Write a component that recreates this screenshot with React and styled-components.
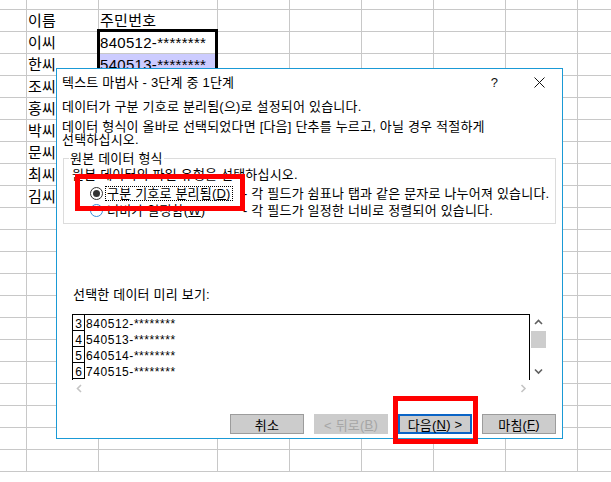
import React from 'react';
import styled, { createGlobalStyle } from 'styled-components';

const GlobalStyle = createGlobalStyle`
  html, body { margin: 0; padding: 0; background: #fff; }
  body { font-family: "Liberation Sans", "Noto Sans CJK KR", sans-serif; color: #000; }
  #root { width: 611px; height: 482px; }
`;

const Page = styled.div`
  position: relative;
  width: 611px;
  height: 482px;
  overflow: hidden;
  background: #fff;
`;

/* ---------- spreadsheet ---------- */
const Sheet = styled.div`
  display: grid;
  grid-template-columns: 27px 72px 119px repeat(6, 72px);
  grid-template-rows: 10px;
  grid-auto-rows: 22px;
`;

const Cell = styled.div`
  box-sizing: border-box;
  border-right: 1px solid #c8c8c8;
  border-bottom: 1px solid #c8c8c8;
  background: ${p => (p.$selected ? '#ccccff' : '#fff')};
  padding-left: 1px;
  font-size: 15px;
  line-height: 22px;
  letter-spacing: 0.3px;
  white-space: nowrap;
  overflow: hidden;
`;

const RangeBorder = styled.div`
  position: absolute;
  left: 97px;
  top: 29px;
  width: 121px;
  height: 300px;
  box-sizing: border-box;
  border: 3px solid #000;
  pointer-events: none;
`;

/* ---------- dialog ---------- */
const Dialog = styled.div`
  position: absolute;
  left: 56px;
  top: 68px;
  width: 507px;
  height: 371px;
  box-sizing: border-box;
  border: 1px solid #1a9ad6;
  background: #fff;
  display: flex;
  flex-direction: column;
  font-size: 13px;
  letter-spacing: 0.2px;
`;

const TitleBar = styled.div`
  display: flex;
  align-items: center;
  height: 23px;
  padding-left: 5px;
`;

const TitleText = styled.div`
  flex: 1;
  padding-top: 5px;
  line-height: 18px;
  white-space: nowrap;
`;

const TitleButton = styled.div`
  width: 45px;
  height: 23px;
  padding-top: 4px;
  box-sizing: border-box;
  display: flex;
  align-items: center;
  justify-content: center;
  font-size: 13px;
  color: #111;
`;

const Body = styled.div`
  display: flex;
  flex-direction: column;
  padding: 0 6px 0 5px;
`;

const Para = styled.p`
  margin: ${p => p.$mt}px 0 0;
  line-height: 13px;
  white-space: pre-line;
`;

const Group = styled.fieldset`
  margin: 6px 0 0 1px;
  padding: 0 0 4px 5px;
  border: 1px solid #dcdcdc;
  min-width: 0;
`;

const GroupLegend = styled.legend`
  padding: 0 1px;
  line-height: 13px;
`;

const GroupHint = styled.div`
  margin: 3px 0 0 3px;
  line-height: 13px;
`;

const RadioRow = styled.div`
  display: grid;
  grid-template-columns: 153px auto;
  align-items: center;
  height: 17px;
  padding-left: 21px;
  margin-top: ${p => p.$mt || 0}px;
`;

const RadioWrap = styled.div`
  display: flex;
  align-items: center;
`;

const RadioCircle = styled.span`
  position: relative;
  width: 13px;
  height: 13px;
  box-sizing: border-box;
  border-radius: 50%;
  border: 1px solid ${p => (p.$hover ? '#3a8fd8' : '#333')};
  background: #fff;
  margin-right: 2px;
  flex-shrink: 0;
  &::after {
    content: '';
    display: ${p => (p.$checked ? 'block' : 'none')};
    position: absolute;
    left: 2px;
    top: 2px;
    width: 7px;
    height: 7px;
    border-radius: 50%;
    background: #333;
  }
`;

const RadioLabel = styled.span`
  line-height: 13px;
  padding: 0 1px;
  border: 1px dotted ${p => (p.$focus ? '#000' : 'transparent')};
  white-space: nowrap;
`;

const Desc = styled.span`
  line-height: 13px;
  white-space: nowrap;
`;

const Mn = styled.span`
  text-decoration: underline;
`;

const PreviewLabel = styled.div`
  margin: 64px 0 0 11px;
  line-height: 13px;
`;

const PreviewFrame = styled.div`
  margin: 13px 0 0 10px;
  width: 475px;
  height: 83px;
  display: grid;
  grid-template-columns: 1fr 17px;
  grid-template-rows: 66px 17px;
  letter-spacing: 0;
`;

const PreviewTable = styled.div`
  box-sizing: border-box;
  border: 1px solid #000;
  border-bottom: none;
  overflow: hidden;
`;

const PreviewRow = styled.div`
  display: flex;
  height: 16px;
  overflow: hidden;
`;

const RowNum = styled.div`
  box-sizing: border-box;
  width: 12px;
  height: 16px;
  border-right: 1px solid #000;
  border-bottom: 1px solid #000;
  text-align: center;
  line-height: 19px;
  font-size: 12px;
  overflow: hidden;
`;

const RowData = styled.div`
  padding-left: 1px;
  line-height: 19px;
  font-size: 12px;
  letter-spacing: 0.55px;
  white-space: nowrap;
`;

const VScroll = styled.div`
  display: flex;
  flex-direction: column;
  align-items: center;
`;

const ArrowBox = styled.div`
  width: 17px;
  height: ${p => p.$h}px;
  display: flex;
  align-items: center;
  justify-content: center;
`;

const Thumb = styled.div`
  width: 15px;
  height: 17px;
  background: #cdcdcd;
`;

const VSpacer = styled.div`
  flex: 1;
`;

const HScroll = styled.div`
  display: flex;
  align-items: center;
  justify-content: space-between;
  padding: 0 3px 0 4px;
`;

const ButtonRow = styled.div`
  display: flex;
  justify-content: flex-end;
  gap: 10px;
  margin-top: 17px;
`;

const Button = styled.div`
  box-sizing: border-box;
  width: 74px;
  height: 20px;
  display: flex;
  align-items: center;
  justify-content: center;
  padding-top: 1px;
  background: #cccccc;
  border: ${p => (p.$default ? '2px solid #0a64c6' : p.$disabled ? '1px solid #cccccc' : '1px solid #9c9c9c')};
  color: ${p => (p.$disabled ? '#a6a6a6' : '#000')};
  font-size: 13px;
  white-space: nowrap;
`;

/* ---------- annotations ---------- */
const RedBox = styled.div`
  position: absolute;
  box-sizing: border-box;
  border: 5px solid #ff0000;
  pointer-events: none;
`;

const Chevron = ({ dir, color }) => {
  const pts = {
    up: '1,5 4.5,1.5 8,5',
    down: '1,1.5 4.5,5 8,1.5',
    left: '5,1 1.5,4.5 5,8',
    right: '1.5,1 5,4.5 1.5,8',
  }[dir];
  const vert = dir === 'up' || dir === 'down';
  return (
    <svg width={vert ? 9 : 7} height={vert ? 7 : 9} viewBox={vert ? '0 0 9 7' : '0 0 7 9'}>
      <polyline points={pts} fill="none" stroke={color} strokeWidth="1.6" />
    </svg>
  );
};

const CloseIcon = () => (
  <svg width="11" height="11" viewBox="0 0 11 11">
    <line x1="0.5" y1="0.5" x2="10.5" y2="10.5" stroke="#111" strokeWidth="1" />
    <line x1="10.5" y1="0.5" x2="0.5" y2="10.5" stroke="#111" strokeWidth="1" />
  </svg>
);

const names = ['이름', '이씨', '한씨', '조씨', '홍씨', '박씨', '문씨', '최씨', '김씨'];
const ids = ['주민번호', '840512-********', '540513-********'];

const previewRows = [
  ['3', '840512-********'],
  ['4', '540513-********'],
  ['5', '640514-********'],
  ['6', '740515-********'],
];

export default function App() {
  const cells = [];
  for (let r = 0; r < 22; r++) {
    for (let c = 0; c < 9; c++) {
      let text = '';
      let selected = false;
      if (r >= 1 && r <= 9) {
        if (c === 1) text = names[r - 1];
        if (c === 2) {
          text = ids[r - 1] || '';
          selected = r >= 3;
        }
      }
      cells.push(
        <Cell key={`${r}-${c}`} $selected={selected}>
          {text}
        </Cell>
      );
    }
  }

  return (
    <Page>
      <GlobalStyle />
      <Sheet>{cells}</Sheet>
      <RangeBorder />

      <Dialog>
        <TitleBar>
          <TitleText>텍스트 마법사 - 3단계 중 1단계</TitleText>
          <TitleButton>?</TitleButton>
          <TitleButton>
            <CloseIcon />
          </TitleButton>
        </TitleBar>
        <Body>
          <Para $mt={8}>데이터가 구분 기호로 분리됨(으)로 설정되어 있습니다.</Para>
          <Para $mt={7}>
            {'데이터 형식이 올바로 선택되었다면 [다음] 단추를 누르고, 아닐 경우 적절하게\n선택하십시오.'}
          </Para>

          <Group>
            <GroupLegend>원본 데이터 형식</GroupLegend>
            <GroupHint>원본 데이터의 파일 유형을 선택하십시오.</GroupHint>
            <RadioRow $mt={4}>
              <RadioWrap>
                <RadioCircle $checked />
                <RadioLabel $focus>
                  구분 기호로 분리됨(<Mn>D</Mn>)
                </RadioLabel>
              </RadioWrap>
              <Desc>- 각 필드가 쉼표나 탭과 같은 문자로 나누어져 있습니다.</Desc>
            </RadioRow>
            <RadioRow>
              <RadioWrap>
                <RadioCircle $hover />
                <RadioLabel>
                  너비가 일정함(<Mn>W</Mn>)
                </RadioLabel>
              </RadioWrap>
              <Desc>- 각 필드가 일정한 너비로 정렬되어 있습니다.</Desc>
            </RadioRow>
          </Group>

          <PreviewLabel>선택한 데이터 미리 보기:</PreviewLabel>
          <PreviewFrame>
            <PreviewTable>
              {previewRows.map(([n, d]) => (
                <PreviewRow key={n}>
                  <RowNum>{n}</RowNum>
                  <RowData>{d}</RowData>
                </PreviewRow>
              ))}
            </PreviewTable>
            <VScroll>
              <ArrowBox $h={17}>
                <Chevron dir="up" color="#606060" />
              </ArrowBox>
              <Thumb />
              <VSpacer />
              <ArrowBox $h={17}>
                <Chevron dir="down" color="#606060" />
              </ArrowBox>
            </VScroll>
            <HScroll>
              <Chevron dir="left" color="#c4c4c4" />
              <Chevron dir="right" color="#c4c4c4" />
            </HScroll>
            <div />
          </PreviewFrame>

          <ButtonRow>
            <Button>취소</Button>
            <Button $disabled>
              &lt; 뒤로(<Mn>B</Mn>)
            </Button>
            <Button $default>
              다음(<Mn>N</Mn>) &gt;
            </Button>
            <Button>
              마침(<Mn>F</Mn>)
            </Button>
          </ButtonRow>
        </Body>
      </Dialog>

      <RedBox style={{ left: 75, top: 174, width: 170, height: 37 }} />
      <RedBox style={{ left: 393, top: 396, width: 85, height: 48 }} />
    </Page>
  );
}
